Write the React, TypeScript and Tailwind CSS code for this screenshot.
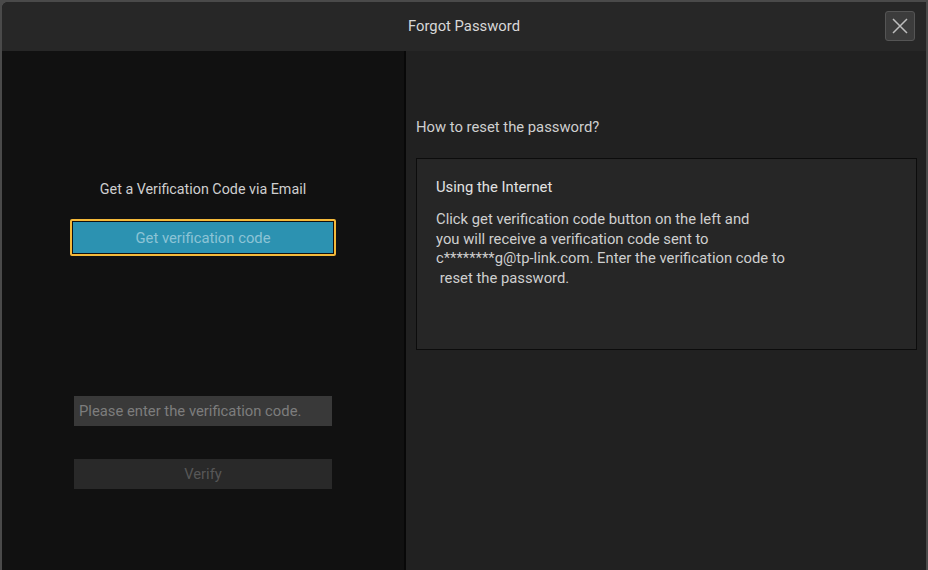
export default function App() {
  return (
    <div className="w-[928px] h-[570px] bg-[#4a4a4a] pt-[2px] px-[2px] overflow-hidden" style={{ fontFamily: "Roboto, 'Noto Sans', sans-serif" }}>
      <div className="flex flex-col h-full bg-[#1c1c1c] rounded-tl-[6px] overflow-hidden">
        {/* header */}
        <div className="relative h-[49px] shrink-0 bg-[#272727] flex items-center justify-center">
          <span className="text-[14.8px] text-[#d8d8d8]">Forgot Password</span>
          <button className="absolute right-[11px] top-[9px] w-[30px] h-[30px] rounded-[3px] bg-[#3c3c3c] border border-[#555] flex items-center justify-center">
            <svg width="18" height="18" viewBox="0 0 18 18" fill="none" stroke="#bdbdbd" strokeWidth="1.5">
              <path d="M2 2L16 16M16 2L2 16" />
            </svg>
          </button>
        </div>
        <div className="flex flex-1">
          {/* left */}
          <div className="w-[404px] shrink-0 bg-[#111] border-r-2 border-[#080808] flex flex-col items-center">
            <p className="mt-[128px] text-[14.3px] text-[#cfcfcf]">Get a Verification Code via Email</p>
            <div className="mt-[19px] w-[266px] h-[37px] border-2 border-[#f4b93a] rounded-[2px] p-[1px] bg-[#111]">
              <div className="h-full bg-[#2c92b1] flex items-center justify-center text-[14.8px] text-[#8cc4d6]">Get verification code</div>
            </div>
            <div className="mt-[140px] w-[258px] h-[30px] bg-[#393939] flex items-center px-[5px] text-[14.8px] text-[#7d7d7d]">Please enter the verification code.</div>
            <div className="mt-[33px] w-[258px] h-[30px] bg-[#292929] flex items-center justify-center text-[14.8px] text-[#575757]">Verify</div>
          </div>
          {/* right */}
          <div className="flex-1 bg-[#212121] pl-[10px] pr-[9px]">
            <p className="mt-[65px] text-[14.8px] text-[#cfcfcf]">How to reset the password?</p>
            <div className="mt-[20px] h-[192px] border border-[#0c0c0c] bg-[#262626] px-[19px] pt-[17px]">
              <p className="text-[14.8px] text-[#e2e2e2]">Using the Internet</p>
              <p className="mt-[12px] text-[14.8px] leading-[19.5px] text-[#cfcfcf]">
                Click get verification code button on the left and<br />
                you will receive a verification code sent to<br />
                c********g@tp-link.com. Enter the verification code to<br />
                &nbsp;reset the password.
              </p>
            </div>
          </div>
        </div>
      </div>
    </div>
  );
}
